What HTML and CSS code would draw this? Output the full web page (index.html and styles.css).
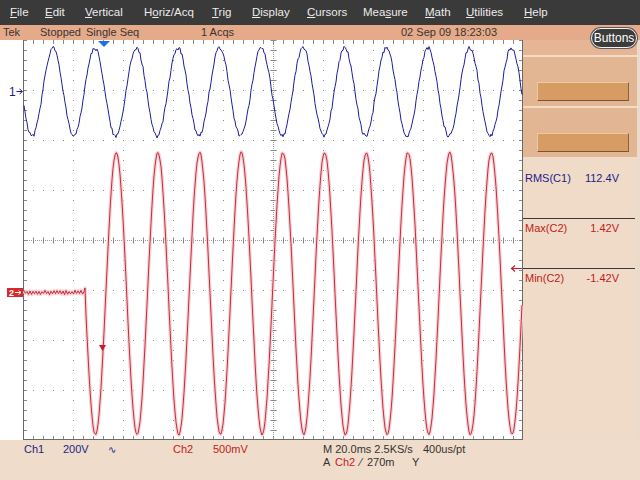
FILE: index.html
```html
<!DOCTYPE html>
<html>
<head>
<meta charset="utf-8">
<title>Tek scope</title>
<link rel="stylesheet" href="styles.css">
</head>
<body>
<div class="screen">
  <div class="menubar">
    <span><u>F</u>ile</span>
    <span><u>E</u>dit</span>
    <span><u>V</u>ertical</span>
    <span>H<u>o</u>riz/Acq</span>
    <span><u>T</u>rig</span>
    <span><u>D</u>isplay</span>
    <span><u>C</u>ursors</span>
    <span>Mea<u>s</u>ure</span>
    <span><u>M</u>ath</span>
    <span><u>U</u>tilities</span>
    <span><u>H</u>elp</span>
  </div>
  <div class="statusbar">
    <span>Tek</span>
    <span>Stopped</span>
    <span>Single Seq</span>
    <span>1 Acqs</span>
    <span>02 Sep 09 18:23:03</span>
  </div>
  <div class="main">
    <svg class="scope" width="523" height="400" viewBox="0 0 523 400">
      <rect x="0" y="0" width="523" height="400" fill="#ffffff"/>
      <g class="grid">
        <line x1="73.5" y1="0" x2="73.5" y2="400"/>
        <line x1="123.5" y1="0" x2="123.5" y2="400"/>
        <line x1="173.5" y1="0" x2="173.5" y2="400"/>
        <line x1="223.5" y1="0" x2="223.5" y2="400"/>
        <line x1="323.5" y1="0" x2="323.5" y2="400"/>
        <line x1="373.5" y1="0" x2="373.5" y2="400"/>
        <line x1="423.5" y1="0" x2="423.5" y2="400"/>
        <line x1="473.5" y1="0" x2="473.5" y2="400"/>
        <line x1="23" y1="50.5" x2="523" y2="50.5"/>
        <line x1="23" y1="100.5" x2="523" y2="100.5"/>
        <line x1="23" y1="150.5" x2="523" y2="150.5"/>
        <line x1="23" y1="250.5" x2="523" y2="250.5"/>
        <line x1="23" y1="300.5" x2="523" y2="300.5"/>
        <line x1="23" y1="350.5" x2="523" y2="350.5"/>
      </g>
      <g class="center">
        <line x1="273.5" y1="0" x2="273.5" y2="400"/>
        <line x1="23" y1="200.5" x2="523" y2="200.5"/>
      </g>
      <g class="ticks">
        <line class="tv" x1="273.5" y1="0" x2="273.5" y2="400" stroke-width="6"/>
        <line class="th" x1="23" y1="200.5" x2="523" y2="200.5" stroke-width="6"/>
        <line class="tv" x1="25" y1="0" x2="25" y2="400" stroke-width="4"/>
        <line class="tv" x1="521" y1="0" x2="521" y2="400" stroke-width="4"/>
        <line class="th" x1="23" y1="2" x2="523" y2="2" stroke-width="4"/>
        <line class="th" x1="23" y1="398" x2="523" y2="398" stroke-width="4"/>
      </g>
      <g class="frame">
        <line x1="23.5" y1="0" x2="23.5" y2="400"/>
        <line x1="23" y1="399.5" x2="523" y2="399.5"/>
        <line x1="522.5" y1="0" x2="522.5" y2="400"/>
      </g>
      <polyline id="ch2halo" class="ch2-halo" points=""/>
      <polyline id="ch2" class="ch2-trace" points=""/>
      <polyline id="ch1" class="ch1-trace" points=""/>
      <polygon class="trig-pos" points="98,1 110,1 104,7"/>
      <text class="mk1" x="9" y="56">1</text>
      <path class="mk1-arrow" d="M16.5 51.5 H22 M19.5 49 L22.5 51.5 L19.5 54"/>
      <rect class="mk2-box" x="7" y="248" width="16" height="9"/>
      <text class="mk2-text" x="9" y="256">2</text>
      <path class="mk2-arrow" d="M15 252.5 H21 M18.5 250.5 L21 252.5 L18.5 254.5"/>
      <polygon class="trig-lvl" points="99,305 106,305 102.5,311"/>
      <path class="lvl-arrow" d="M511 228.5 H522 M515 225.5 L511.5 228.5 L515 231.5"/>
    </svg>
    <div class="side">
      <div class="side-top"></div>
      <div class="slot"><div class="slot-btn"></div></div>
      <div class="slot"><div class="slot-btn"></div></div>
      <div class="meas">
        <div class="meas-row blue"><span>RMS(C1)</span><span>112.4V</span></div>
        <div class="meas-row red"><span>Max(C2)</span><span>1.42V</span></div>
        <div class="meas-row red"><span>Min(C2)</span><span>-1.42V</span></div>
      </div>
    </div>
  </div>
  <div class="bottom">
    <div class="readout">
      <span class="blue">Ch1</span>
      <span class="blue">200V</span>
      <span class="blue sym">∿</span>
      <span class="red">Ch2</span>
      <span class="red">500mV</span>
    </div>
    <div class="timebase">
      <div class="tb-line1"><span>M 20.0ms 2.5KS/s</span><span>400us/pt</span></div>
      <div class="tb-line2"><span>A</span><span class="red">Ch2</span><span>⁄</span><span>270m</span><span>Y</span></div>
    </div>
  </div>
  <div class="buttons-pill">Buttons</div>
</div>
<script src="script.js"></script>
</body>
</html>
```

FILE: styles.css
```css
* { box-sizing: border-box; }
html, body { margin: 0; padding: 0; }
body {
  width: 640px;
  height: 480px;
  overflow: hidden;
  background: #ffffff;
  font-family: "Liberation Sans", Arial, sans-serif;
}
.screen { position: relative; width: 640px; height: 480px; }

.menubar {
  height: 25px;
  background: #3a3a3a;
  color: #ececec;
  font-size: 11.5px;
  line-height: 25px;
  display: grid;
  grid-template-columns: 35px 40px 59px 68px 40px 55px 56px 62px 41px 58px auto;
  padding-left: 10px;
  white-space: nowrap;
}
.menubar u { text-decoration: underline; text-underline-offset: 1px; }

.statusbar {
  height: 15px;
  background: #e5aa8a;
  color: #3a3430;
  font-size: 11px;
  line-height: 15px;
  display: grid;
  grid-template-columns: 37px 46px 115px 200px auto;
  padding-left: 3px;
  white-space: nowrap;
}

.main { display: flex; height: 400px; }
.scope { display: block; flex: none; }

.grid line { stroke: #8a8a8a; stroke-width: 1; stroke-dasharray: 1 9; }
.center line { stroke: #9a9a9a; stroke-width: 1; stroke-dasharray: 1 1; }
.ticks line { stroke: #8a8a8a; stroke-dasharray: 1 9; }
.frame line { stroke: #6a6a6a; stroke-width: 1; }

.ch1-trace { fill: none; stroke: #1e1e9a; stroke-width: 1; stroke-linejoin: round; }
.ch2-trace { fill: none; stroke: #b81c2a; stroke-width: 0.9; stroke-linejoin: round; }
.ch2-halo { fill: none; stroke: #f8d2d6; stroke-width: 3.5; stroke-linejoin: round; }

.trig-pos { fill: #1f6fe6; }
.mk1 { font-family: "Liberation Sans", Arial, sans-serif; font-size: 12px; fill: #1c1c80; }
.mk1-arrow { fill: none; stroke: #1c1c96; stroke-width: 1; }
.mk2-box { fill: #d8282c; }
.mk2-text { font-family: "Liberation Sans", Arial, sans-serif; font-size: 9px; font-weight: bold; fill: #ffffff; }
.mk2-arrow { fill: none; stroke: #ffffff; stroke-width: 1; }
.trig-lvl { fill: #c41f2c; }
.lvl-arrow { fill: none; stroke: #c41f2c; stroke-width: 1.2; }

.side {
  width: 117px;
  background: #efdbc7;
  display: flex;
  flex-direction: column;
  border-right: 3px solid #eadbcc;
}
.side-top { height: 15px; background: #e5b596; }
.slot {
  height: 51px;
  background: #e2b693;
  border-top: 2px solid #f4dcc8;
  padding: 25px 0 0 14px;
}
.slot-btn {
  width: 92px;
  height: 19px;
  background: #d69c63;
  border-top: 1px solid #ecc8a4;
  border-left: 1px solid #ecc8a4;
  border-right: 1px solid #8a6242;
  border-bottom: 1px solid #7a5438;
}
.meas { padding-top: 12px; }
.meas-row {
  display: flex;
  justify-content: space-between;
  width: 112px;
  height: 50px;
  border-bottom: 1px solid #3a3a3a;
  font-size: 11px;
  line-height: 18px;
  padding: 0 16px 0 2px;
  white-space: nowrap;
}
.meas-row:last-child { border-bottom: none; }

.blue { color: #1c1c8c; }
.red { color: #c01c22; }

.bottom {
  height: 40px;
  background: #f0dcca;
  display: flex;
  padding-top: 3px;
  font-size: 11px;
  line-height: 13px;
  color: #333333;
  white-space: nowrap;
}
.readout {
  margin-left: 24px;
  width: 299px;
  display: grid;
  grid-template-columns: 39px 45px 65px 40px auto;
  align-self: flex-start;
}
.sym { font-family: "DejaVu Sans", sans-serif; font-size: 10px; }
.tb-line1 { display: grid; grid-template-columns: 100px auto; }
.tb-line2 { display: grid; grid-template-columns: 12px 25px 7px 45px auto; }

.buttons-pill {
  position: absolute;
  left: 591px;
  top: 28px;
  width: 46px;
  height: 20px;
  border-radius: 10px;
  background: #3c3c3c;
  border: 1px solid #f2f2f2;
  box-shadow: 0 0 0 1px #5a5a5a;
  color: #ffffff;
  font-size: 12px;
  line-height: 18px;
  text-align: center;
}
```

FILE: script.js
```js
(function () {
  var seed = 9137;
  function rnd() {
    seed = (seed * 1103515245 + 12345) % 2147483648;
    return seed / 2147483648;
  }
  var P = 41.67;
  var blue = [];
  for (var x = 24; x <= 522; x += 1) {
    var y = 52 - 44 * Math.cos(2 * Math.PI * (x - 53) / P) + (rnd() - 0.5) * 4;
    blue.push(x + ',' + y.toFixed(1));
  }
  document.getElementById('ch1').setAttribute('points', blue.join(' '));

  var red = [];
  var i = 0;
  for (var xr = 24; xr < 85; xr += 1.5) {
    var off = (i % 2 ? 1.8 : -1.8) * (0.4 + rnd() * 0.8);
    red.push(xr.toFixed(1) + ',' + (252.5 + off).toFixed(1));
    i++;
  }
  red.push('85,248');
  for (var x2 = 86; x2 <= 522; x2 += 1) {
    var y2 = 253.5 + 141 * Math.sin(2 * Math.PI * (x2 - 85) / P) + (rnd() - 0.5) * 1.6;
    red.push(x2 + ',' + y2.toFixed(1));
  }
  var pts = red.join(' ');
  document.getElementById('ch2').setAttribute('points', pts);
  document.getElementById('ch2halo').setAttribute('points', pts);
})();
```
